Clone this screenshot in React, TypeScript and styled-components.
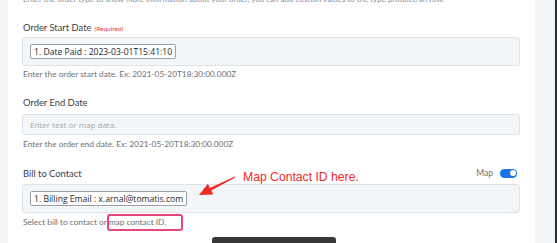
import React from "react";
import styled, { createGlobalStyle } from "styled-components";

const Global = createGlobalStyle`
  html, body { margin: 0; padding: 0; overflow: hidden; background: #f3f6f9; }
  body { width: 557px; height: 243px; }
`;

const Page = styled.div`
  display: flex;
  width: 557px;
  height: 243px;
  background: #f3f6f9;
  padding-left: 8px;
  box-sizing: border-box;
  overflow: hidden;
`;

const Card = styled.div`
  position: relative;
  width: 527px;
  flex: none;
  background: #ffffff;
  padding: 0 15px 0 14px;
  box-sizing: border-box;
  font-family: Lato, "Open Sans", sans-serif;
`;

const Gutter = styled.div`
  flex: 1;
`;

const EdgeBar = styled.div`
  width: 2px;
  background: #2b2b2b;
`;

const Intro = styled.div`
  margin-top: -5px;
  height: 9px;
  font-size: 8px;
  line-height: 9px;
  color: #8a8f96;
  white-space: nowrap;
  padding-left: 1px;
`;

const Field = styled.div<{ $top: number }>`
  margin-top: ${(p) => p.$top}px;
  display: flex;
  flex-direction: column;
`;

const LabelRow = styled.div`
  display: flex;
  align-items: center;
  justify-content: space-between;
  height: 12px;
`;

const Label = styled.div`
  font-size: 9.4px;
  color: #3a3f45;
  padding-left: 1px;
`;

const Required = styled.span`
  font-size: 6.5px;
  color: #e8334a;
  margin-left: 3px;
`;

const MapToggle = styled.div`
  display: flex;
  align-items: center;
  gap: 7px;
  font-size: 8.5px;
  color: #6b7178;
  margin-right: 3px;
`;

const Switch = styled.div`
  position: relative;
  width: 17px;
  height: 9px;
  border-radius: 5px;
  background: #1a73e8;
  &::after {
    content: "";
    position: absolute;
    right: 1.5px;
    top: 1.5px;
    width: 6px;
    height: 6px;
    border-radius: 50%;
    background: #fff;
  }
`;

const InputBox = styled.div<{ $h: number; $gap: number }>`
  margin-top: ${(p) => p.$gap}px;
  height: ${(p) => p.$h}px;
  box-sizing: border-box;
  background: #f3f6f9;
  border: 1px solid #dde2e7;
  border-radius: 3px;
  display: flex;
  align-items: center;
  padding-left: 7px;
`;

const Chip = styled.div`
  height: 15px;
  box-sizing: border-box;
  border: 1px solid #9aa0a6;
  border-radius: 2px;
  background: #fff;
  padding: 0 3px;
  display: flex;
  align-items: center;
  font-family: "Open Sans", sans-serif;
  font-size: 8.6px;
  color: #23272b;
  white-space: nowrap;
`;

const Placeholder = styled.div`
  font-family: "Open Sans", sans-serif;
  font-size: 8px;
  color: #a3a8ae;
`;

const Help = styled.div<{ $gap: number }>`
  margin-top: ${(p) => p.$gap}px;
  font-size: 8.3px;
  line-height: 10px;
  color: #6b7178;
  padding-left: 1px;
  position: relative;
`;

const Highlight = styled.span`
  position: absolute;
  left: 85px;
  top: -3px;
  width: 76px;
  height: 17px;
  border: 2px solid #e8457a;
  border-radius: 3px;
  box-sizing: border-box;
`;

const Annotation = styled.div`
  position: absolute;
  left: 235px;
  top: 170px;
  font-family: "Liberation Sans", Arial, sans-serif;
  font-size: 12.2px;
  color: #ee2a2a;
  white-space: nowrap;
`;

const Arrow = styled.svg`
  position: absolute;
  left: 187px;
  top: 172px;
`;

const BottomButton = styled.div`
  position: absolute;
  left: 204px;
  top: 237px;
  width: 124px;
  height: 12px;
  border-radius: 3px 3px 0 0;
  background: #383838;
`;

export default function App() {
  return (
    <>
      <Global />
      <Page>
        <Card>
          <Intro>
            Enter the order type to show more information about your order, you can add custom values to the type product/an row.
          </Intro>

          <Field $top={17}>
            <LabelRow>
              <Label>
                Order Start Date<Required>(Required)</Required>
              </Label>
            </LabelRow>
            <InputBox $h={29} $gap={4}>
              <Chip>1. Date Paid : 2023-03-01T15:41:10</Chip>
            </InputBox>
            <Help $gap={3}>Enter the order start date. Ex: 2021-05-20T18:30:00.000Z</Help>
          </Field>

          <Field $top={17}>
            <LabelRow>
              <Label>Order End Date</Label>
            </LabelRow>
            <InputBox $h={21} $gap={6}>
              <Placeholder>Enter text or map data.</Placeholder>
            </InputBox>
            <Help $gap={4}>Enter the order end date. Ex: 2021-05-20T18:30:00.000Z</Help>
          </Field>

          <Field $top={18}>
            <LabelRow>
              <Label>Bill to Contact</Label>
              <MapToggle>
                Map
                <Switch />
              </MapToggle>
            </LabelRow>
            <InputBox $h={29} $gap={5}>
              <Chip>1. Billing Email : x.arnal@tomatis.com</Chip>
            </InputBox>
            <Help $gap={4}>
              Select bill to contact or map contact ID.
              <Highlight />
            </Help>
          </Field>

          <Arrow width="46" height="30" viewBox="0 0 46 30">
            <path
              d="M4 23 L12.9 11.8 L14.9 15.9 L39.8 4.6 L40.2 5.4 L16.3 18.5 L18.3 22.6 Z"
              fill="#ee2a2a"
            />
          </Arrow>
          <Annotation>Map Contact ID here.</Annotation>
          <BottomButton />
        </Card>
        <Gutter />
        <EdgeBar />
      </Page>
    </>
  );
}
